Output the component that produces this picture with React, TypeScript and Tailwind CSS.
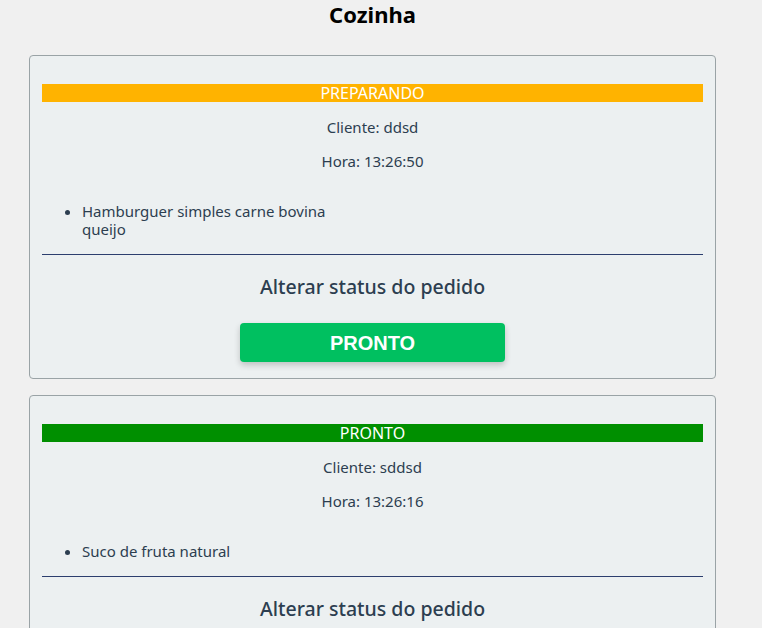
type Pedido = {
  status: "PREPARANDO" | "PRONTO";
  cliente: string;
  hora: string;
  itens: string[];
  proximo: string;
};

const pedidos: Pedido[] = [
  {
    status: "PREPARANDO",
    cliente: "ddsd",
    hora: "13:26:50",
    itens: ["Hamburguer simples carne bovina queijo"],
    proximo: "PRONTO",
  },
  {
    status: "PRONTO",
    cliente: "sddsd",
    hora: "13:26:16",
    itens: ["Suco de fruta natural"],
    proximo: "ENTREGUE",
  },
];

function PedidoCard({ pedido }: { pedido: Pedido }) {
  const barColor = pedido.status === "PREPARANDO" ? "bg-[#ffb300]" : "bg-[#008f00]";
  return (
    <div className="rounded-[4px] border border-[#9aa3a6] bg-[#ecf0f1] px-3 pt-[28px] pb-4">
      <div className={`${barColor} h-[18px] text-center text-[16px] leading-[18px] text-white`}>{pedido.status}</div>
      <p className="mt-[16px] text-center text-[15px] leading-[18px] text-[#2c3e50]">Cliente: {pedido.cliente}</p>
      <p className="mt-4 text-center text-[15px] leading-[18px] text-[#2c3e50]">Hora: {pedido.hora}</p>
      <ul className="mt-[32px] w-1/2 list-disc pl-10 text-[15px] leading-[18px] text-[#2c3e50]">
        {pedido.itens.map((item) => (
          <li key={item}>{item}</li>
        ))}
      </ul>
      <hr className="mt-4 border-t border-[#2c3e6e]" />
      <h2 className="mt-[20px] text-center text-[19.5px] font-medium leading-[24px] text-[#2c3e50]">Alterar status do pedido</h2>
      <div className="mt-6 flex justify-center">
        <button
          type="button"
          className="h-[39px] w-[265px] rounded-[4px] bg-[#00c060] font-['Liberation_Sans',Arial,sans-serif] text-[20px] font-bold text-white shadow-[0_3px_6px_rgba(0,0,0,0.2)]"
        >
          {pedido.proximo}
        </button>
      </div>
    </div>
  );
}

export default function App() {
  return (
    <div className="min-h-screen bg-[#f0f0f0] font-['Noto_Sans',sans-serif]">
      <div className="w-[745px]">
        <h1 className="text-center text-[22px] font-bold leading-[28px] text-black">Cozinha</h1>
        <div className="ml-[29px] mt-[27px] flex w-[687px] flex-col gap-[16px]">
          {pedidos.map((pedido) => (
            <PedidoCard key={pedido.cliente} pedido={pedido} />
          ))}
        </div>
      </div>
    </div>
  );
}
